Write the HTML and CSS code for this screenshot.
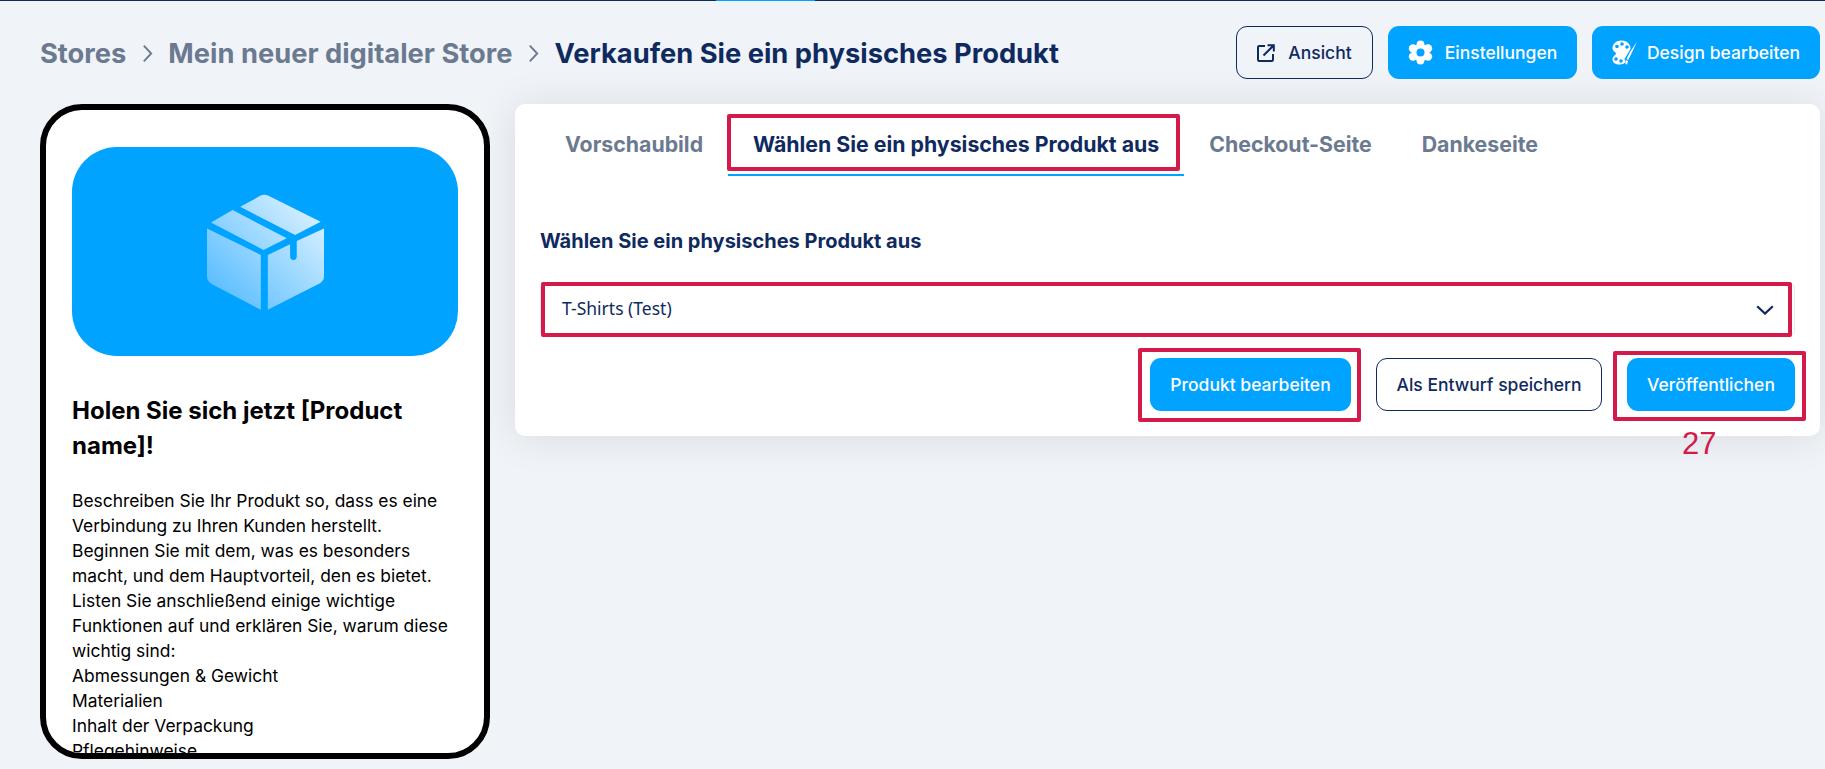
FILE: index.html
```html
<!DOCTYPE html>
<html lang="de">
<head>
<meta charset="utf-8">
<title>Verkaufen Sie ein physisches Produkt</title>
<link rel="stylesheet" href="styles.css">
</head>
<body>
<div class="progress"><span class="progress-fill"></span></div>
<header class="topbar">
  <nav class="crumbs">
    <span class="crumb">Stores</span>
    <svg class="crumb-sep" viewBox="0 0 10 18"><path d="M1.500 1.500 8.500 9l-7 7.500"/></svg>
    <span class="crumb">Mein neuer digitaler Store</span>
    <svg class="crumb-sep" viewBox="0 0 10 18"><path d="M1.500 1.500 8.500 9l-7 7.500"/></svg>
    <span class="crumb crumb-current">Verkaufen Sie ein physisches Produkt</span>
  </nav>
  <div class="top-actions">
    <button class="btn btn-outline btn-view">
      <svg class="icon-view" viewBox="0 0 18 18"><path d="M8 2H2.200C1.500 2 1 2.500 1 3.200v12.600c0 .7.500 1.200 1.200 1.200h12.600c.7 0 1.200-.5 1.200-1.200V10M6.500 11.500 16.500 1.500M10.500 1.200h6.300v6.300"/></svg>
      Ansicht
    </button>
    <button class="btn btn-primary btn-settings">
      <svg class="icon-lg" viewBox="0 0 25 24">
        <g fill="#fff"><circle cx="12.500" cy="12" r="8.800"/><circle cx="12.500" cy="4" r="3.900"/><circle cx="12.500" cy="20" r="3.900"/><circle cx="5" cy="7.900" r="4.200"/><circle cx="20" cy="7.900" r="4.200"/><circle cx="5" cy="16.100" r="4.200"/><circle cx="20" cy="16.100" r="4.200"/></g>
        <circle cx="12.500" cy="12" r="4" fill="#00a3ff"/>
      </svg>
      Einstellungen
    </button>
    <button class="btn btn-primary btn-design">
      <svg class="icon-lg" viewBox="0 0 25 25">
        <path fill="#fff" d="M9.500.5C4 .5.500 4 .500 8.500c0 2.500 2.500 3.500 3.500 4.500 1 1.200-3.500 2.800-3.500 6.500 0 3 3 5 7 5 3.500 0 6-1.500 7-3.500l4-10C19.500 5 15.500.5 9.500.5Z"/>
        <g fill="#00a3ff"><circle cx="5" cy="6.500" r="1.800"/><circle cx="10" cy="4" r="1.800"/><circle cx="15" cy="7" r="1.800"/><circle cx="4" cy="19" r="1.800"/><circle cx="9" cy="21" r="1.800"/></g>
        <path fill="#00a3ff" d="M21.500 4 12.500 19l2 5 4-2Z"/>
        <path fill="#fff" d="M24.800 2 20 12.500l-3.800 7.500-1.700-.9 3.800-7.500 6.500-9.600ZM14 20l2 1-1 3.700-1.600-1.100Z"/>
      </svg>
      Design bearbeiten
    </button>
  </div>
</header>
<main class="workspace">
  <aside class="phone">
    <div class="hero">
      <svg class="hero-box" viewBox="80 57 352 348">
        <defs><linearGradient id="boxfill" gradientUnits="userSpaceOnUse" x1="432" y1="70" x2="90" y2="400"><stop offset="0" stop-color="#e6f6ff"/><stop offset="1" stop-color="#4db8ff"/></linearGradient></defs>
        <g fill="url(#boxfill)">
          <path d="M180 95 240 62Q252 55 265 62L422 140 345 180Z"/>
          <path d="M157 105 320 190 250 225 92 142Z"/>
          <path d="M80 160 242 240V405L95 328Q80 320 80 305Z"/>
          <path d="M263 240 330 208V243Q330 255 340 255 350 255 350 243V198L432 160V305Q432 318 420 325L263 405Z"/>
        </g>
      </svg>
    </div>
    <h2 class="phone-title">Holen Sie sich jetzt [Product name]!</h2>
    <p class="phone-text">Beschreiben Sie Ihr Produkt so, dass es eine Verbindung zu Ihren Kunden herstellt. Beginnen Sie mit dem, was es besonders macht, und dem Hauptvorteil, den es bietet. Listen Sie anschließend einige wichtige Funktionen auf und erklären Sie, warum diese wichtig sind:<br>Abmessungen &amp; Gewicht<br>Materialien<br>Inhalt der Verpackung<br>Pflegehinweise</p>
  </aside>
  <section class="card">
    <div class="tabs">
      <div class="tab">Vorschaubild</div>
      <div class="tab tab-active">Wählen Sie ein physisches Produkt aus<span class="mark mark-tab"></span></div>
      <div class="tab">Checkout-Seite</div>
      <div class="tab">Dankeseite</div>
    </div>
    <div class="card-body">
      <div class="field-label">Wählen Sie ein physisches Produkt aus</div>
      <div class="select">
        <span class="select-value">T-Shirts (Test)</span>
        <svg class="select-chevron" viewBox="0 0 18 10"><path d="M1.200 1.200 9 8.600l7.800-7.400"/></svg>
        <span class="mark mark-select"></span>
      </div>
      <div class="card-actions">
        <div class="marked">
          <button class="btn btn-primary btn-edit">Produkt bearbeiten</button>
          <span class="mark mark-edit"></span>
        </div>
        <button class="btn btn-outline btn-draft">Als Entwurf speichern</button>
        <div class="marked">
          <button class="btn btn-primary btn-publish">Veröffentlichen</button>
          <span class="mark mark-publish"></span>
          <span class="mark-number">27</span>
        </div>
      </div>
    </div>
  </section>
</main>
</body>
</html>
```
FILE: styles.css
```css
* { box-sizing: border-box; }
html, body { margin: 0; height: 769px; overflow: hidden; }
body {
  background: #f0f4f9;
  font-family: Inter, "Liberation Sans", sans-serif;
  color: #0f2a5f;
}
.progress { height: 1px; background: #0f2a5f; }
.progress-fill { display: block; width: 99px; height: 1px; margin-left: 716px; background: #00a3ff; }

.topbar {
  display: flex;
  justify-content: space-between;
  align-items: center;
  height: 53px;
  margin-top: 25px;
  padding: 0 5px 0 40px;
}
.crumbs { display: flex; align-items: center; gap: 15.500px; padding-top: 2px; font-size: 27.300px; font-weight: 700; }
.crumb { color: #6b7a90; }
.crumb-current { color: #0f2a5f; }
.crumb-sep { width: 11px; height: 19px; fill: none; stroke: #6b7a90; stroke-width: 1.800; }
.top-actions { display: flex; gap: 15px; }

.btn {
  display: inline-flex;
  align-items: center;
  justify-content: center;
  height: 53px;
  padding: 0;
  border-radius: 11px;
  font: 500 17.500px Inter, "Liberation Sans", sans-serif;
  white-space: nowrap;
  cursor: pointer;
}
.btn-primary { background: #00a3ff; border: 0; color: #fff; }
.btn-outline { background: transparent; border: 1px solid #0f2a5f; color: #0f2a5f; }
.btn-view { width: 137px; gap: 13px; }
.btn-settings { width: 189px; gap: 12px; }
.btn-design { width: 228px; gap: 10px; }
.btn-edit { width: 201px; }
.btn-draft { width: 226px; background: #fff; }
.btn-publish { width: 168px; }
.icon-view { width: 18px; height: 18px; fill: none; stroke: #0f2a5f; stroke-width: 2; }
.icon-lg { width: 25px; height: 25px; }

.workspace { display: flex; align-items: flex-start; gap: 25px; margin-top: 25px; padding: 0 5px 0 40px; }

.phone {
  flex: 0 0 450px;
  height: 655px;
  padding: 37px 26px 0;
  border: 6px solid #000;
  border-radius: 42px;
  background: #fff;
  color: #000;
  overflow: hidden;
}
.hero {
  display: flex;
  align-items: center;
  justify-content: center;
  height: 209px;
  border-radius: 45px;
  background: #00a3ff;
}
.hero-box { width: 117px; height: 116px; }
.phone-title { margin: 37px 0 25px; font-size: 24px; line-height: 35px; font-weight: 700; }
.phone-text { margin: 0; font-size: 17.400px; line-height: 25px; }

.card {
  flex: 1;
  height: 332px;
  border-radius: 10px;
  background: #fff;
  box-shadow: 0 2px 40px rgba(0, 0, 0, .1);
}
.tabs { display: flex; padding: 10px 25px 0; }
.tab {
  position: relative;
  height: 62px;
  padding: 0 25px;
  border-bottom: 2px solid transparent;
  font-size: 21.300px;
  font-weight: 700;
  line-height: 60px;
  color: #6b7a90;
  white-space: nowrap;
}
.tab-active { color: #0f2a5f; border-bottom-color: #00a3ff; }
.card-body { padding: 53px 25px 0; }
.field-label { font-size: 20px; font-weight: 700; line-height: 24px; }
.select {
  position: relative;
  display: flex;
  align-items: center;
  justify-content: space-between;
  height: 51px;
  margin-top: 31px;
  padding: 0 20px 0 21px;
  border: 1px solid #e4e7ec;
  border-radius: 4px;
}
.select-value { padding-bottom: 4px; font: 17.500px "Noto Sans", sans-serif; }
.select-chevron { width: 18px; height: 10px; fill: none; stroke: #0f2a5f; stroke-width: 2.200; }
.card-actions { display: flex; justify-content: flex-end; gap: 25px; margin-top: 23px; }
.marked { position: relative; display: flex; }

.mark { position: absolute; border: 4px solid #d31a4a; border-radius: 2px; pointer-events: none; }
.mark-tab { inset: 0 4px 3px -1px; }
.mark-select { inset: -3px 2px -3px 0; }
.mark-edit { inset: -10px -10px -11px -12px; }
.mark-publish { inset: -7px -11px -10px -14px; }
.mark-number {
  position: absolute;
  top: 68px;
  left: 55px;
  font: 31px/1.150 "Liberation Sans", sans-serif;
  color: #d31a4a;
}
```
